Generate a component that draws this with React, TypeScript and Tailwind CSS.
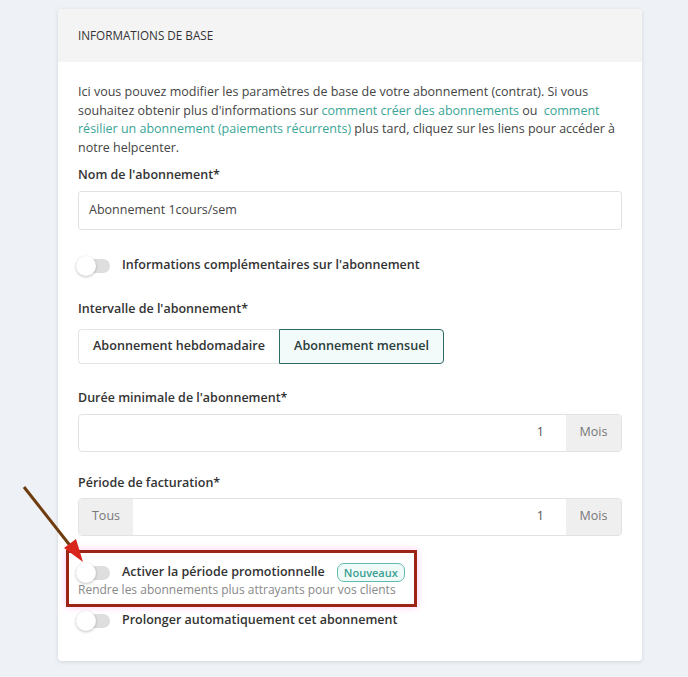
import React from "react";

const Toggle = () => (
  <span className="relative inline-flex h-[20px] w-[34px] shrink-0 items-center">
    <span className="h-[14px] w-[34px] rounded-full bg-[#dedede]" />
    <span className="absolute left-0 top-0 h-[20px] w-[20px] rounded-full bg-white shadow-[0_1px_3px_rgba(0,0,0,0.25)]" />
  </span>
);

const Label = ({ children }: { children: React.ReactNode }) => (
  <div className="h-[20px] text-[12.5px] font-semibold leading-[20px] text-[#333]">{children}</div>
);

const ToggleRow = ({ children, className }: { children: React.ReactNode; className?: string }) => (
  <div className={"flex h-[20px] items-center gap-[12px] " + (className ?? "")}>
    <div className="-ml-[2px] flex">
      <Toggle />
    </div>
    {children}
  </div>
);

export default function App() {
  return (
    <div
      className="relative h-[677px] w-[688px] overflow-hidden bg-[#eef1f5] pt-[9px]"
      style={{ fontFamily: '"Open Sans", "Noto Sans", sans-serif' }}
    >
      <div className="ml-[58px] w-[584px] overflow-hidden rounded-[4px] bg-white shadow-[0_1px_4px_rgba(0,0,0,0.12)]">
        <div className="flex h-[53px] items-center bg-[#f4f4f5] px-[20px] text-[11.7px] font-medium text-[#333]">
          INFORMATIONS DE BASE
        </div>
        <div className="px-[20px] pb-[30px] pt-[21px]">
          <p className="text-[12.5px] leading-[18.7px] text-[#444]">
            Ici vous pouvez modifier les paramètres de base de votre abonnement (contrat). Si vous souhaitez obtenir
            plus d'informations sur <span className="text-[#3aa597]">comment créer des abonnements</span> ou{" "}
            <span className="ml-[3px] text-[#3aa597]">comment résilier un abonnement (paiements récurrents)</span> plus
            tard, cliquez sur les liens pour accéder à notre helpcenter.
          </p>

          <div className="mt-[7px]">
            <Label>Nom de l'abonnement*</Label>
            <div className="mt-[6px] flex h-[39px] items-center rounded-[3px] border border-[#e2e2e2] px-[10px] text-[12.5px] text-[#444]">
              Abonnement 1cours/sem
            </div>
          </div>

          <ToggleRow className="mt-[26px]">
            <span className="text-[12.5px] font-semibold text-[#333]">
              Informations complémentaires sur l'abonnement
            </span>
          </ToggleRow>

          <div className="mt-[23px]">
            <Label>Intervalle de l'abonnement*</Label>
            <div className="mt-[10px] flex h-[35px] w-[366px] text-[12.6px] font-semibold text-[#333]">
              <div className="flex w-[201px] items-center justify-center rounded-l-[4px] border border-r-0 border-[#e4e4e4]">
                Abonnement hebdomadaire
              </div>
              <div className="flex flex-1 items-center justify-center rounded-r-[4px] border border-[#2f6b66] bg-[#f3fbfa] text-[#2a3d3b]">
                Abonnement mensuel
              </div>
            </div>
          </div>

          <div className="mt-[24px]">
            <Label>Durée minimale de l'abonnement*</Label>
            <div className="mt-[6px] flex h-[38px] overflow-hidden rounded-[4px] border border-[#e2e2e2] text-[12.5px] text-[#555]">
              <div className="flex flex-1 items-center justify-end pr-[22px]">1</div>
              <div className="flex w-[55px] items-center justify-center bg-[#efefef] text-[#777]">Mois</div>
            </div>
          </div>

          <div className="mt-[21px]">
            <Label>Période de facturation*</Label>
            <div className="mt-[5px] flex h-[38px] overflow-hidden rounded-[4px] border border-[#e2e2e2] text-[12.5px] text-[#555]">
              <div className="flex w-[54px] items-center justify-center bg-[#efefef] text-[#777]">Tous</div>
              <div className="flex flex-1 items-center justify-end pr-[22px]">1</div>
              <div className="flex w-[55px] items-center justify-center bg-[#efefef] text-[#777]">Mois</div>
            </div>
          </div>

          <div className="mt-[14px] -ml-[12px] w-fit border-[3px] border-[#9c2414] pb-[6px] pl-[9px] pr-[9px] pt-[10px] shadow-[0_0_7px_rgba(255,160,235,0.55)]">
            <ToggleRow>
              <span className="text-[12.5px] font-semibold text-[#333]">Activer la période promotionnelle</span>
              <span className="flex h-[19px] items-center rounded-[7px] border border-[#5fbdb0] bg-[#f0fbf9] px-[6px] text-[11px] font-semibold text-[#3a9f92]">
                Nouveaux
              </span>
            </ToggleRow>
            <div className="-mt-[1px] whitespace-nowrap text-[12px] leading-[16px] text-[#888]">
              Rendre les abonnements plus attrayants pour vos clients
            </div>
          </div>

          <ToggleRow className="mt-[4px]">
            <span className="text-[12.5px] font-semibold text-[#333]">Prolonger automatiquement cet abonnement</span>
          </ToggleRow>
        </div>
      </div>

      <svg className="pointer-events-none absolute left-0 top-0" width="688" height="677">
        <line x1="24" y1="487" x2="72" y2="548" stroke="#6e3c0e" strokeWidth="3" />
        <polygon points="83,562 64,548 76,539" fill="#d9261a" />
      </svg>
    </div>
  );
}
